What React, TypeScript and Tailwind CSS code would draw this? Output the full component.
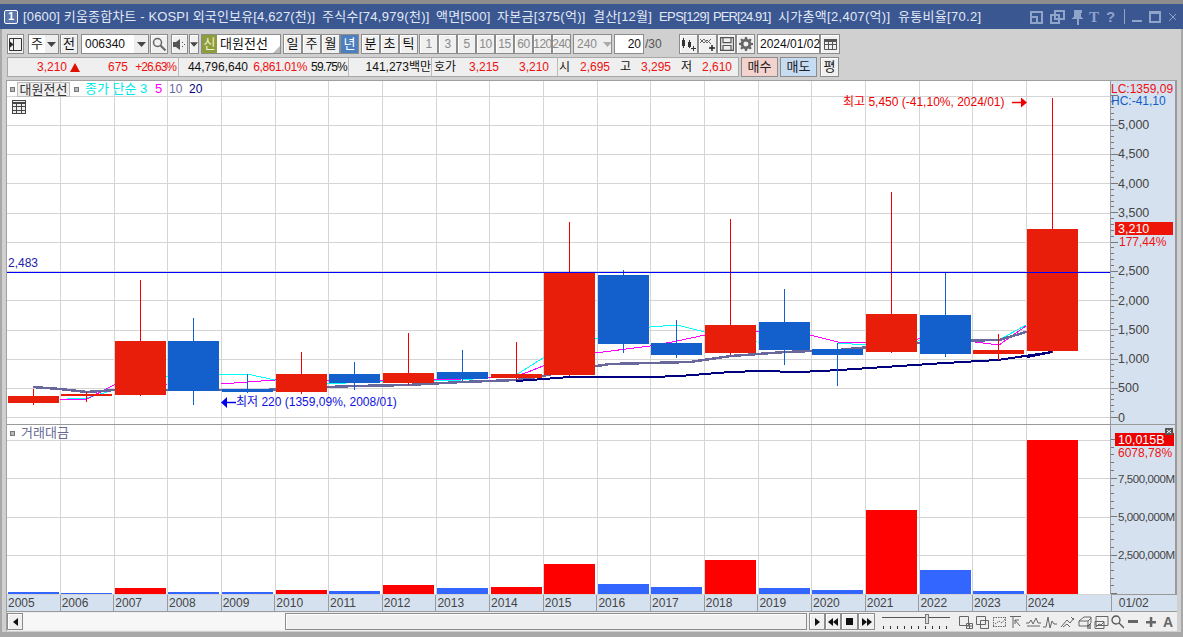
import type { ReactNode } from "react";

const gridX = Array.from({ length: 19 }, (_, i) => Math.round(60 + 53.67 * i));
const years = Array.from({ length: 20 }, (_, i) => 2005 + i);

// [x, bodyTop, bodyBottom, wickTop, wickBottom, up]
const candles: [number, number, number, number, number, boolean][] = [
	[8, 396, 403, 389, 405, true],
	[61, 394, 396, 392, 402, true],
	[115, 341, 395, 280, 396, true],
	[168, 341, 391, 318, 405, false],
	[222, 389, 392, 374, 393, false],
	[276, 374, 392, 352, 394, true],
	[329, 374, 383, 362, 390, false],
	[383, 373, 383, 333, 385, true],
	[437, 372, 379, 350, 381, false],
	[491, 374, 378, 342, 380, true],
	[544, 273, 375, 222, 376, true],
	[598, 275, 344, 270, 353, false],
	[651, 343, 355, 320, 358, false],
	[705, 325, 353, 219, 355, true],
	[759, 322, 350, 289, 365, false],
	[812, 349, 355, 343, 386, false],
	[866, 314, 352, 192, 353, true],
	[920, 315, 354, 272, 357, false],
	[973, 350, 354, 334, 360, true],
	[1027, 229, 351, 98, 353, true],
];

const ma3 = "67,398 87,398 114,390 141,380 168,376 221,374 247,374 275,380 301,384 347,383 408,381 462,380 516,375 543,358 570,345 623,332 650,327 677,325 705,332 731,338 757,342 810,343 838,343 865,345 892,342 945,340 999,340 1026,325";
const ma5 = "60,399 87,399 114,385 168,384 221,384 247,382 275,380 330,381 408,380 462,379 516,376 528,372 543,366 595,353 650,346 677,341 705,335 757,331 810,335 838,342 865,343 892,340 945,338 975,342 999,345 1026,326";
const ma10 = "33,387 60,389 87,392 114,390 141,390 221,390 247,391 301,388 355,386 408,385 462,382 516,380 543,376 570,370 610,364 650,363 690,362 731,356 785,352 838,350 892,345 945,341 999,340 1026,332 1052,330";
const ma20 = "516,381 530,380 570,377 650,377 680,376 705,374 730,372 760,371 800,372 840,370 870,368 900,366 945,363 998,360 1052,352";

const bars: [number, number, boolean][] = [
	[8, 592, false], [61, 593, false], [115, 588, true], [168, 592, false], [222, 592, false],
	[276, 590, true], [329, 591, false], [383, 585, true], [437, 588, false], [491, 587, true],
	[544, 564, true], [598, 584, false], [651, 587, false], [705, 560, true], [759, 588, false],
	[812, 590, false], [866, 510, true], [920, 570, false], [973, 591, false], [1027, 440, true],
];

const btn = "flex items-center justify-center border border-[#8c8c8c] bg-[#f0f0f0] shadow-[inset_1px_1px_0_#fff]";

function Caret({ color = "#444" }: { color?: string }) {
	return (
		<svg width="9" height="5" viewBox="0 0 9 5">
			<path d="M0 0h9L4.5 5z" fill={color} />
		</svg>
	);
}

function TitleIcons() {
	return (
		<div className="flex items-center pr-[7px] text-[#8ea4c8]">
			<svg width="146" height="16" viewBox="0 0 146 16" fill="none" stroke="#8ea4c8" strokeWidth="1.5" shapeRendering="crispEdges">
				<path d="M1 3h11v11H1zM1 8h6v6" />
				<path d="M25 2h9v8h-9zM21 6h8v8h-8z" />
				<path d="M44 1h8l-1 6 2 3h-11l2-3zM47 10h2v6h-2z" fill="#8ea4c8" stroke="none" />
				<text x="59" y="13" fontSize="15" fontWeight="700" fill="#8ea4c8" stroke="none" fontFamily="Liberation Serif">T</text>
				<text x="76" y="13" fontSize="15" fontWeight="700" fill="#8ea4c8" stroke="none">?</text>
				<path d="M94 0v15" strokeWidth="1" />
				<path d="M102 12h10" strokeWidth="2" />
				<path d="M120 3h10v10h-10z" />
				<path d="M120 4h10" strokeWidth="2" />
				<path d="M139 4l8 8M147 4l-8 8" strokeWidth="1" />
			</svg>
		</div>
	);
}

function TitleText() {
	return (
		<div className="flex pl-[5px] text-[13px] whitespace-pre text-[#e2e8f4]">
			<span className="w-[299px] tracking-[0.15px]">[0600] 키움종합차트 - KOSPI 외국인보유[4,627(천)]</span>
			<span className="w-[114px] tracking-[0.3px]">주식수[74,979(천)]</span>
			<span className="w-[61px] tracking-[0.25px]">액면[500]</span>
			<span className="w-[96px] tracking-[0.3px]">자본금[375(억)]</span>
			<span className="w-[66px] tracking-[0.2px]">결산[12월]</span>
			<span className="w-[54px] tracking-[-0.6px]">EPS[129]</span>
			<span className="w-[65px] tracking-[-0.9px]">PER[24.91]</span>
			<span className="w-[120px] tracking-[0.3px]">시가총액[2,407(억)]</span>
			<span className="tracking-[0.3px]">유통비율[70.2]</span>
		</div>
	);
}

function RowOne() {
	return (
		<div className="flex h-[20px] text-[13px] text-[#111] mt-[5px]">
			<div className={`${btn} ml-[1px] w-[17px]`}>
				<svg width="13" height="13" viewBox="0 0 13 13" fill="none" stroke="#333">
					<path d="M.5.5h12v12H.5zM4.5.5v12" />
					<path d="M0 3l4 3.5L0 10z" fill="#222" />
				</svg>
			</div>
			<div className="ml-[4px] flex w-[31px] border border-[#8c8c8c] bg-white">
				<span className="flex flex-1 items-center justify-center">주</span>
				<span className="flex w-[13px] items-center justify-center bg-[#eee]"><Caret /></span>
			</div>
			<div className={`${btn} ml-[1px] w-[18px]`}>전</div>
			<div className="ml-[3px] flex w-[68px] border border-[#8c8c8c] bg-white">
				<span className="flex-1 pl-[3px] text-[12px] leading-[18px]">006340</span>
				<span className="flex w-[14px] items-center justify-center bg-[#eee]"><Caret /></span>
			</div>
			<div className={`${btn} ml-[1px] w-[18px]`}>
				<svg width="14" height="14" viewBox="0 0 14 14" fill="none" stroke="#666" strokeWidth="1.5">
					<circle cx="5.5" cy="5.5" r="4" />
					<path d="M8.5 8.5l5 5" strokeWidth="2" />
				</svg>
			</div>
			<div className={`${btn} ml-[3px] w-[17px]`}>
				<svg width="13" height="11" viewBox="0 0 13 11" fill="#555">
					<path d="M0 3h3l4-3v11L3 8H0zM9 3h1v1H9zM9 7h1v1H9zM11 5h1v1h-1z" />
				</svg>
			</div>
			<div className={`${btn} ml-[1px] w-[10px]`}><Caret /></div>
			<div className="relative ml-[2px] flex w-[80px] items-center border border-[#8c8c8c] bg-white">
				<span className="flex h-full w-[15px] items-center justify-center bg-[#8d9c3c] text-[#eef2d0]">신</span>
				<span className="pl-[3px]">대원전선</span>
				<span className="absolute right-0 bottom-0 h-0 w-0 border-t-[7px] border-l-[7px] border-t-transparent border-l-transparent border-b-0 border-r-[7px] border-r-[#bbb]" />
			</div>
			<div className="ml-[2px] flex">
				<div className={`${btn} w-[19px]`}>일</div>
				<div className={`${btn} w-[19px]`}>주</div>
				<div className={`${btn} w-[19px]`}>월</div>
				<div className="flex w-[19px] items-center justify-center border border-[#8c8c8c] bg-[#4b7fc0] text-white">년</div>
			</div>
			<div className="ml-[2px] flex">
				<div className={`${btn} w-[19px]`}>분</div>
				<div className={`${btn} w-[19px]`}>초</div>
				<div className={`${btn} w-[19px]`}>틱</div>
			</div>
			<div className="ml-[1px] flex text-[12px] text-[#8a8a8a]">
				{["1", "3", "5", "10", "15", "60", "120", "240"].map((t) => (
					<div key={t} className={`${btn} w-[19px] tracking-[-0.5px]`}>{t}</div>
				))}
			</div>
			<div className="ml-[2px] flex w-[39px] items-center border border-[#8c8c8c] bg-[#eee] text-[12px] text-[#8a8a8a]">
				<span className="pl-[3px]">240</span>
				<span className="ml-[6px]"><Caret color="#aaa" /></span>
			</div>
			<div className="ml-[2px] w-[30px] border border-[#8c8c8c] bg-white pr-[2px] text-right text-[12px] leading-[18px]">20</div>
			<span className="w-[35px] pl-[1px] text-[12px] leading-[20px] text-[#555]">/30</span>
			<div className="flex">
				<div className={`${btn} w-[19px]`}>
					<svg width="15" height="14" viewBox="0 0 15 14" fill="#333">
						<path d="M1 3h3v6H1zM2 1h1v10H2zM7 5h3v5H7zM8 3h1v8H8zM10 11h5v1h-5zM12 9h1v5h-1z" />
					</svg>
				</div>
				<div className={`${btn} w-[19px]`}>
					<svg width="15" height="14" viewBox="0 0 15 14" fill="none" stroke="#666">
						<path d="M0 6l4-4 3 4 4-4M0 2l4 4 3-3 4 4" />
						<path d="M9 11h6M12 8v6" stroke="#222" strokeWidth="1.5" />
					</svg>
				</div>
				<div className={`${btn} w-[19px]`}>
					<svg width="14" height="14" viewBox="0 0 14 14" fill="none" stroke="#555" strokeWidth="1.2">
						<path d="M.6.6h12.8v12.8H.6zM3 .6v5h8v-5M3 13V8.5h8V13" />
					</svg>
				</div>
				<div className={`${btn} w-[19px]`}>
					<svg width="14" height="14" viewBox="0 0 14 14" fill="#666">
						<path fillRule="evenodd" d="M6 0h2l.4 2 1.3.5L11.4 1.400l1.300 1.300-1.100 1.700.5 1.300 1.900.4v1.800l-1.900.4-.5 1.300 1.100 1.700-1.300 1.300-1.700-1.100-1.300.5L8 14H6l-.4-2-1.300-.5-1.700 1.100-1.300-1.300 1.100-1.700-.5-1.300L0 8V6l1.900-.4.500-1.300L1.300 2.700 2.600 1.400l1.700 1.100 1.300-.5zM7 4.500a2.500 2.500 0 100 5 2.500 2.500 0 000-5z" />
					</svg>
				</div>
			</div>
			<div className="ml-[2px] flex w-[63px] items-center border border-[#8c8c8c] bg-white pl-[2px] text-[12px]">2024/01/02</div>
			<div className={`${btn} w-[20px]`}>
				<svg width="13" height="12" viewBox="0 0 13 12" fill="none" stroke="#555">
					<path d="M.5 1.500h12v10H.5zM.5 6.500h12M4.500 3v8M8.500 3v8" />
					<path d="M0 1h13v3H0z" fill="#555" stroke="none" />
				</svg>
			</div>
		</div>
	);
}

function RowTwo() {
	return (
		<div className="mt-[3px] flex h-[20px] text-[12px] text-[#ee1111]">
			<div className="ml-[1px] flex w-[732px] border border-[#a8a8a8] bg-[#efefef] leading-[18px] whitespace-pre">
				<span className="w-[59px] text-right">3,210</span>
				<span className="ml-[3px] flex w-[10px] items-center"><svg width="10" height="9" viewBox="0 0 10 9"><path d="M5 0l5 9H0z" fill="#e01000" /></svg></span>
				<span className="w-[48px] text-right">675</span>
				<span className="w-[48px] text-right tracking-[-1px]">+26.63%</span>
				<span className="w-[1px] ml-[2px] bg-[#bbb]" />
				<span className="w-[69px] text-right text-[#111]">44,796,640</span>
				<span className="w-[59px] text-right tracking-[-0.4px]">6,861.01%</span>
				<span className="w-[40px] text-right tracking-[-0.8px] text-[#111]">59.75%</span>
				<span className="w-[1px] ml-[1px] bg-[#bbb]" />
				<span className="w-[82px] text-right text-[#111]">141,273백만</span>
				<span className="w-[1px] bg-[#bbb]" />
				<span className="w-[24px] pl-[2px] text-[#111]">호가</span>
				<span className="w-[43px] text-right">3,215</span>
				<span className="w-[50px] text-right">3,210</span>
				<span className="ml-[8px] w-[1px] bg-[#bbb]" />
				<span className="w-[20px] pl-[1px] text-[#111]">시</span>
				<span className="w-[32px] text-right">2,695</span>
				<span className="w-[30px] pl-[10px] text-[#111]">고</span>
				<span className="w-[31px] text-right">3,295</span>
				<span className="w-[30px] pl-[10px] text-[#111]">저</span>
				<span className="w-[31px] text-right">2,610</span>
			</div>
			<div className="ml-[2px] flex w-[37px] items-center justify-center border border-[#8c8c8c] bg-[#f4d2cd] text-[13px] text-[#222]">매수</div>
			<div className="ml-[2px] flex w-[37px] items-center justify-center border border-[#8c8c8c] bg-[#c6dcf3] text-[13px] text-[#222]">매도</div>
			<div className={`${btn} ml-[3px] w-[19px] text-[13px] text-[#111]`}>평</div>
		</div>
	);
}

function PriceChart() {
	const hGrid = [96, 125, 154, 183, 213, 242, 271, 300, 330, 359, 388, 417];
	return (
		<svg className="absolute inset-0" width="1104" height="344" viewBox="7 81 1104 344" shapeRendering="crispEdges">
			{hGrid.map((y) => (
				<path key={y} d={`M7 ${y}.5H1111`} stroke="#d4d4d4" />
			))}
			{gridX.map((x) => (
				<path key={x} d={`M${x}.5 81V424`} stroke="#d4d4d4" />
			))}
			<polyline points={ma3} fill="none" stroke="#00ffff" />
			<polyline points={ma5} fill="none" stroke="#ff00ff" />
			<polyline points={ma10} fill="none" stroke="#68689c" strokeWidth="2.500" />
			<polyline points={ma20} fill="none" stroke="#000080" strokeWidth="2" />
			{candles.map(([x, top, bottom, wt, wb, up]) => (
				<g key={x} fill={up ? "#e81e0a" : "#135fcb"}>
					<rect x={x + 25} y={wt} width="1" height={wb - wt} fill={up ? "#f00000" : "#135fcb"} />
					<rect x={x} y={top} width="51" height={bottom - top} />
				</g>
			))}
			<polyline points="1027,357 1052,352" fill="none" stroke="#000080" strokeWidth="2" />
			<path d="M7 272.500H1111" stroke="#0000ff" />
			<text x="8" y="267" fontSize="12" fill="#2222aa">2,483</text>
			<g shapeRendering="auto">
				<text x="843" y="106" fontSize="12" fill="#ee0000">최고 5,450 (-41,10%, 2024/01)</text>
				<path d="M1012 102.500h9" stroke="#ee0000" strokeWidth="1.500" />
				<path d="M1021 97.500l6 5-6 5z" fill="#ee0000" />
				<path d="M236 402.500h-9" stroke="#0000ee" strokeWidth="1.500" />
				<path d="M227 397l-6 5.500 6 5.500z" fill="#0000ee" />
				<text x="236" y="406" fontSize="12" fill="#1111dd">최저 220 (1359,09%, 2008/01)</text>
			</g>
		</svg>
	);
}

function VolumeChart() {
	return (
		<svg className="absolute inset-0" width="1104" height="170" viewBox="7 425 1104 170" shapeRendering="crispEdges">
			{[440, 478, 517, 555].map((y) => (
				<path key={y} d={`M7 ${y}.5H1111`} stroke="#d4d4d4" />
			))}
			{gridX.map((x) => (
				<path key={x} d={`M${x}.5 425V595`} stroke="#d4d4d4" />
			))}
			<path d="M7 594.500H1111" stroke="#d4d4d4" />
			{bars.map(([x, top, up]) => (
				<rect key={x} x={x} y={top} width="51" height={594 - top} fill={up ? "#ff0000" : "#3366ff"} />
			))}
		</svg>
	);
}

function PriceAxis() {
	// 3,000 sits under the current-price box in the reference, so it has no label
	const major = [
		["5,000", 0], ["4,500", 1], ["4,000", 2], ["3,500", 3], ["2,500", 5],
		["2,000", 6], ["1,500", 7], ["1,000", 8], ["500", 9], ["0", 10],
	] as const;
	const minor = Array.from({ length: 56 }, (_, i) => i);
	return (
		<svg className="absolute inset-0" width="65" height="344" viewBox="1112 81 65 344">
			<g shapeRendering="crispEdges">
				{minor.map((i) => (
					<path key={i} d={`M1112 ${Math.round(417 - i * 5.85)}.5h${i % 5 === 0 ? 7 : 3}`} stroke="#777" />
				))}
			</g>
			<text x="1112" y="93" fontSize="12" fill="#ee1111">LC:1359,09</text>
			<text x="1112" y="105" fontSize="12" fill="#0d5fcc">HC:-41,10</text>
			{major.map(([label, i]) => (
				<text key={label} x="1119" y={129 + i * 29.25} fontSize="12.500" fill="#444">{label}</text>
			))}
			<rect x="1116" y="222" width="58" height="13" fill="#ee1508" />
			<text x="1119" y="233" fontSize="12.500" fill="#fff">3,210</text>
			<text x="1120" y="246" fontSize="12" fill="#ee1111">177,44%</text>
		</svg>
	);
}

function VolumeAxis() {
	const labels = [["7,500,000M", 483], ["5,000,000M", 521], ["2,500,000M", 559]] as const;
	const ticks = Array.from({ length: 21 }, (_, i) => i);
	return (
		<svg className="absolute inset-0" width="65" height="170" viewBox="1112 425 65 170">
			<g shapeRendering="crispEdges">
				{ticks.map((i) => (
					<path key={i} d={`M1112 ${Math.round(593 - i * 7.7)}.5h${i % 5 === 0 ? 6 : 3}`} stroke="#777" />
				))}
			</g>
			{labels.map(([t, y]) => (
				<text key={t} x="1119" y={y} fontSize="11.500" textLength="57" fill="#444">{t}</text>
			))}
			<rect x="1116" y="433" width="59" height="13" fill="#ee0000" />
			<text x="1119" y="444" fontSize="12.500" fill="#fff">10,015B</text>
			<text x="1119" y="457" fontSize="12" fill="#ee1111">6078,78%</text>
			<rect x="1166" y="428" width="8" height="7" fill="#555" />
			<path d="M1168 430l4 3M1172 430l-4 3" stroke="#fff" />
		</svg>
	);
}

function Square({ className }: { className: string }) {
	return <span className={`absolute size-[5px] border border-[#777] bg-[#b8b8b8] ${className}`} />;
}

function XAxis() {
	return (
		<div className="flex h-[18px] border-y border-[#9a9a9a] bg-[#d6e1ef] text-[12px] leading-[16px] text-[#444]">
			{years.map((y, i) => (
				<span key={y} className={`box-border w-[53.68px] border-r border-[#9a9a9a] pl-[1px] ${i === 19 ? "w-[85px]" : ""}`}>
					{y}
				</span>
			))}
			<span className="pl-[7px]">01/02</span>
		</div>
	);
}

function MiniIcon({ children }: { children: ReactNode }) {
	return (
		<svg width="15" height="14" viewBox="0 0 15 14" fill="none" stroke="#666" className="mr-[2px] shrink-0">
			{children}
		</svg>
	);
}

function BottomBar() {
	return (
		<div className="flex h-[19px] items-center bg-[#efefef]">
			<div className={`${btn} h-[17px] w-[16px]`}>
				<svg width="5" height="8" viewBox="0 0 5 8"><path d="M5 0v8L0 4z" fill="#111" /></svg>
			</div>
			<div className="h-[17px] w-[262px] bg-[#f7f7f7]" />
			<div className={`${btn} h-[17px] w-[522px]`} />
			<div className={`${btn} ml-[2px] h-[17px] w-[16px]`}>
				<svg width="5" height="8" viewBox="0 0 5 8"><path d="M0 0v8l5-4z" fill="#111" /></svg>
			</div>
			<div className={`${btn} h-[17px] w-[16px]`}>
				<svg width="10" height="8" viewBox="0 0 10 8"><path d="M5 0v8L0 4zM10 0v8L5 4z" fill="#111" /></svg>
			</div>
			<div className={`${btn} h-[17px] w-[17px]`}>
				<span className="size-[7px] bg-[#111]" />
			</div>
			<div className={`${btn} h-[17px] w-[17px]`}>
				<svg width="10" height="8" viewBox="0 0 10 8"><path d="M0 0v8l5-4zM5 0v8l5-4z" fill="#111" /></svg>
			</div>
			<svg width="72" height="17" viewBox="0 0 72 17" className="ml-[6px] shrink-0" shapeRendering="crispEdges">
				<path d="M1 4.500h68" stroke="#555" strokeWidth="1.500" />
				<path d="M44 1h3v9h-3z" fill="#ddd" stroke="#777" />
				{[2, 9, 16, 23, 30, 37, 44, 51, 58, 65].map((x) => (
					<path key={x} d={`M${x} 13v3`} stroke="#333" />
				))}
			</svg>
			<div className="ml-[5px] flex items-center">
				<MiniIcon><path d="M1.500 1.500h9v9h-9zM8.500 8.500h6v5h-6zM11.500 8.500v5M8.500 11h6" /></MiniIcon>
				<MiniIcon><path d="M1.500 1.500h9v8h-9zM5.500 5.500h8v8h-8z" fill="#eee" /></MiniIcon>
				<MiniIcon><path d="M1 2.500h13M1 11.500h13M13.500 2v10M1.500 2v10M3 9l4-3 3 2 3-4" strokeDasharray="1.500 1" /></MiniIcon>
				<MiniIcon><path d="M1 1.500h11M4 2v11M11 11L6 5M6 5h4M6 5v4" /></MiniIcon>
				<MiniIcon><path d="M0 8h3l2-3 2 4 3-6 2 5h3M1 11h13" /></MiniIcon>
				<MiniIcon><path d="M0 12h3l2-10 2 11 2-7 2 3h3" /></MiniIcon>
				<MiniIcon><path d="M1 12L7 5l3 3 4-5M3 12l4-3 3 3M11 2l3 3" /></MiniIcon>
				<MiniIcon><path d="M2 6l5-4h7v6l-3 3H2zM2 6h9v5M11 6l3-3" /><path d="M11 10v4M13 9v5" stroke="#333" /></MiniIcon>
				<MiniIcon><path d="M2 1.500h12v9H2zM1 6.500h9v7H1zM2 12l3-3 2 1 3-3" /></MiniIcon>
				<svg width="13" height="14" viewBox="0 0 13 14" fill="none" stroke="#555" strokeWidth="1.300" className="mr-[4px] shrink-0">
					<circle cx="5" cy="5" r="4" />
					<path d="M8 8l5 5" />
				</svg>
				<span className="mr-[8px] h-[3px] w-[10px] bg-[#666]" />
				<svg width="10" height="10" viewBox="0 0 10 10" fill="#666" className="mr-[7px] shrink-0">
					<path d="M0 4h10v2.500H0zM3.800 0h2.500v10H3.800z" />
				</svg>
				<span className="text-[14px] leading-[14px] font-bold text-[#666]">A</span>
			</div>
		</div>
	);
}

export default function App() {
	return (
		<div className="flex h-[637px] w-[1183px] flex-col overflow-hidden bg-[#d0d0d0] [font-family:'Liberation_Sans','Noto_Sans_CJK_KR',sans-serif]">
			<div className="h-[4px] shrink-0 bg-[#8e8e8e]" />
			<div className="flex h-[25px] shrink-0 items-center justify-between bg-[#3a5792] pl-[4px]">
				<div className="flex items-center">
					<span className="flex size-[14px] items-center justify-center rounded-[2px] border border-white bg-[#5a76ad] text-[11px] font-bold text-white">1</span>
					<TitleText />
				</div>
				<TitleIcons />
			</div>
			<div className="flex flex-1 flex-col border-x-[2px] border-x-[#a8a8a8] px-[4px]">
				<RowOne />
				<RowTwo />
				<div className="mt-[3px] flex w-[1171px] flex-col border-l border-[#a0a0a0]">
					<div className="flex h-[344px] border-t border-[#a0a0a0]">
						<div className="relative w-[1104px] bg-white text-[13px]">
							<PriceChart />
							<Square className="top-[6px] left-[3px]" />
							<span className="absolute top-[1px] left-[10px] flex h-[15px] w-[53px] items-center justify-center border border-[#bbb] bg-[#efefef] text-[#333]">대원전선</span>
							<Square className="top-[6px] left-[67px]" />
							<span className="absolute top-[0px] left-[78px] leading-[16px] text-[#00e8e8]">종가 단순 3</span>
							<span className="absolute top-[0px] left-[148px] leading-[16px] text-[#ff00ff]">5</span>
							<span className="absolute top-[0px] left-[162px] text-[12px] leading-[16px] text-[#68689c]">10</span>
							<span className="absolute top-[0px] left-[182px] text-[12px] leading-[16px] text-[#000080]">20</span>
							<svg className="absolute top-[19px] left-[5px]" width="14" height="14" viewBox="0 0 14 14" fill="none" stroke="#444" shapeRendering="crispEdges">
								<path d="M.5.5h13v13H.5z" fill="#eee" />
								<path d="M.5 2.500h13" strokeWidth="2" />
								<path d="M.5 6.500h13M.5 10.500h13M4.500 3v10M9.500 3v10" />
							</svg>
						</div>
						<div className="relative w-[65px] border-l border-[#9a9a9a] bg-[#d6e1ef]">
							<PriceAxis />
						</div>
						<div className="w-[2px] bg-[#9a9a9a]" />
					</div>
					<div className="flex h-[170px] border-t border-[#9a9a9a]">
						<div className="relative w-[1104px] bg-white text-[13px]">
							<VolumeChart />
							<Square className="top-[6px] left-[3px]" />
							<span className="absolute top-[0px] left-[14px] leading-[16px] text-[#666a94]">거래대금</span>
						</div>
						<div className="relative w-[65px] border-l border-[#9a9a9a] bg-[#d6e1ef]">
							<VolumeAxis />
						</div>
						<div className="w-[2px] bg-[#9a9a9a]" />
					</div>
					<XAxis />
					<BottomBar />
				</div>
			</div>
			<div className="h-[5px] shrink-0 bg-[#a8a8a8]" />
		</div>
	);
}
